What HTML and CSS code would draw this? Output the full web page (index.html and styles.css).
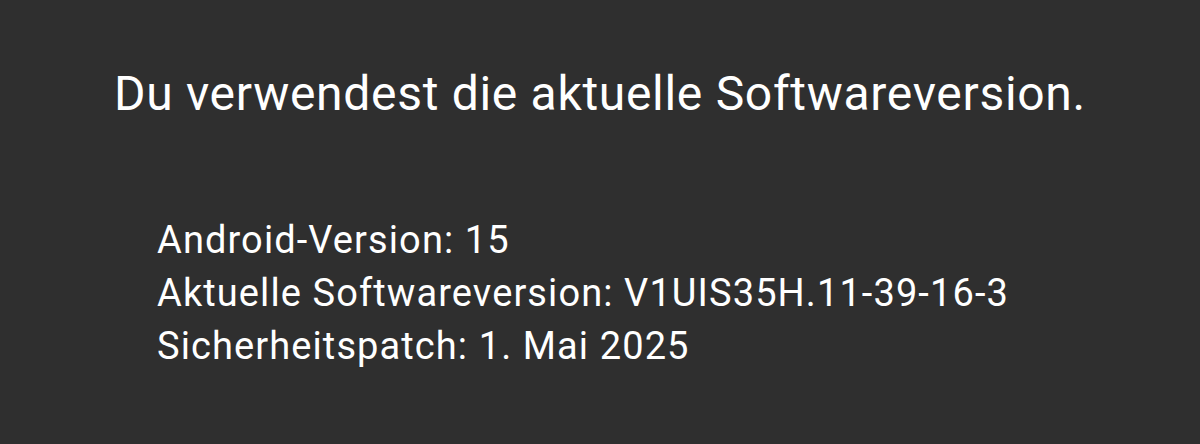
FILE: index.html
```html
<!DOCTYPE html>
<html lang="de">
<head>
  <meta charset="UTF-8">
  <title>Softwareupdate</title>
  <link rel="stylesheet" href="styles.css">
</head>
<body>
  <div class="screen">
    <h1 class="status">Du verwendest die aktuelle Softwareversion.</h1>
    <div class="info">
      <p>Android-Version: 15</p>
      <p>Aktuelle Softwareversion: V1UIS35H.11-39-16-3</p>
      <p>Sicherheitspatch: 1. Mai 2025</p>
    </div>
  </div>
</body>
</html>
```

FILE: styles.css
```css
html, body {
  margin: 0;
  background: #2f2f2f;
}

body {
  font-family: Roboto, 'Noto Sans', sans-serif;
  color: #ffffff;
}

.screen {
  height: 444px;
  padding: 66px 0 0 114px;
  box-sizing: border-box;
}

.status {
  margin: 0;
  font-size: 48px;
  font-weight: 400;
  line-height: 56px;
  letter-spacing: 0.7px;
}

.info {
  margin-top: 92px;
  padding-left: 43px;
}

.info p {
  margin: 0;
  font-size: 38px;
  line-height: 53px;
  letter-spacing: 1.1px;
}
```
